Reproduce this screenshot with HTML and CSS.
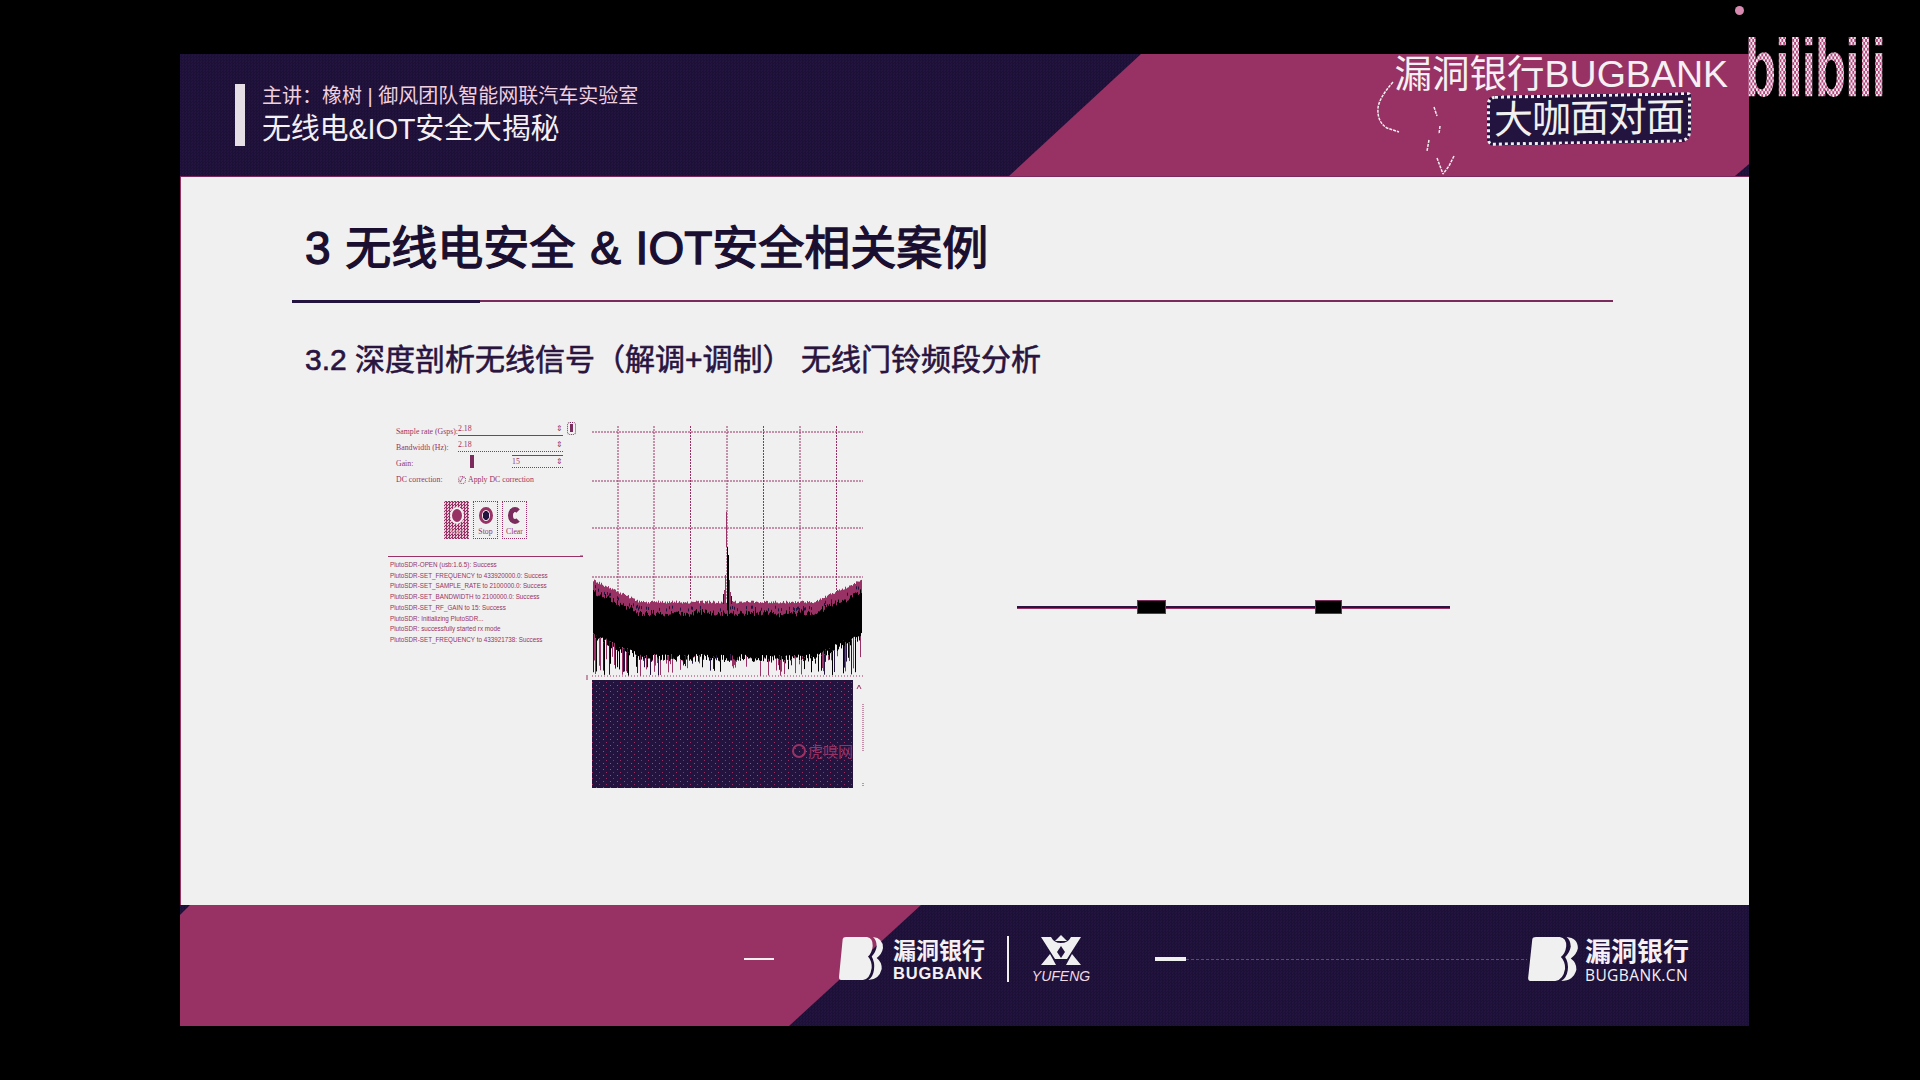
FILE: index.html
```html
<!DOCTYPE html>
<html lang="zh-CN">
<head>
  <meta charset="UTF-8" />
  <title>无线电&amp;IOT安全大揭秘</title>
  <link rel="stylesheet" href="styles.css">
</head>
<body>
  <svg class="defs" width="0" height="0">
    <symbol id="bb-logo" viewBox="0 0 46 46" preserveAspectRatio="none">
      <path fill="#f0f0f0" d="M4.700 3 Q5 1 8 1 L29 1 Q35 2 34.700 10 Q34 17 30 20.500 Q34 25 33.700 32 Q32 43 25 44 L3 44 Q1 44 1 41 Z"/>
      <path fill="#f0f0f0" d="M35 1 Q45 2 45 12 Q44 18 38.700 22 Q44 26 43.700 33 Q41 44 30.300 44 Q35 41 36 33.700 Q37 26 33.700 20.500 Q38 16 38.700 10.300 Q38.500 4 35 1 Z"/>
    </symbol>
  </svg>

  <div class="slide">
    <header class="top-bar">
      <div class="talk">
        <p class="talk-by">主讲&#xFF1A;橡树 | 御风团队智能网联汽车实验室</p>
        <p class="talk-name">无线电&amp;IOT安全大揭秘</p>
      </div>
      <svg class="map-line" viewBox="0 0 90 125" width="90" height="125">
        <path class="map-stroke" d="M20 28 Q6 44 5 54 Q4 68 14 74 L26 78"/>
        <path class="map-stroke" d="M61 53 L64 62 M67 72 L66 80 M56 86 L54 97 M64 104 L70 120 M81 102 L76 112 L70 120"/>
      </svg>
      <div class="brand">
        <div class="brand-name">漏洞银行BUGBANK</div>
        <div class="brand-show"><span>大咖面对面</span></div>
      </div>
    </header>

    <main class="sheet">
      <h1 class="sheet-title">3 无线电安全 &amp; IOT安全相关案例</h1>
      <div class="rule"></div>
      <h2 class="sheet-sub">3.2 深度剖析无线信号&#xFF08;解调+调制&#xFF09; 无线门铃频段分析</h2>

      <div class="demo">
        <div class="gui">
          <div class="gui-row">
            <span>Sample rate (Gsps):</span>
            <span class="field solid">2.18<i>&#8661;</i></span>
            <span class="lock"></span>
          </div>
          <div class="gui-row">
            <span>Bandwidth (Hz):</span>
            <span class="field">2.18<i>&#8661;</i></span>
          </div>
          <div class="gui-row">
            <span>Gain:</span>
            <span class="gain">
              <span class="gain-thumb"></span>
              <span class="field gain-field">15<i>&#8661;</i></span>
            </span>
          </div>
          <div class="gui-row">
            <span>DC correction:</span>
            <span class="check"><b>&#10003;</b>Apply DC correction</span>
          </div>

          <div class="gui-btns">
            <div class="gui-btn active"><span class="ring"></span>Start</div>
            <div class="gui-btn"><span class="ring stop"></span>Stop</div>
            <div class="gui-btn"><span class="ring clear"></span>Clear</div>
          </div>

          <div class="gui-log">
            <div>PlutoSDR-OPEN (usb:1.6.5): Success</div>
            <div>PlutoSDR-SET_FREQUENCY to 433920000.0: Success</div>
            <div>PlutoSDR-SET_SAMPLE_RATE to 2100000.0: Success</div>
            <div>PlutoSDR-SET_BANDWIDTH to 2100000.0: Success</div>
            <div>PlutoSDR-SET_RF_GAIN to 15: Success</div>
            <div>PlutoSDR: Initializing PlutoSDR...</div>
            <div>PlutoSDR: successfully started rx mode</div>
            <div>PlutoSDR-SET_FREQUENCY to 433921738: Success</div>
          </div>
        </div>

        <svg class="spectrum" id="spectrum" viewBox="580 420 290 375" width="290" height="375">
          <defs>
            <pattern id="fall-dots" width="7" height="6" patternUnits="userSpaceOnUse">
              <rect x="1" y="1" width="1" height="1" fill="#b0407a"/>
              <rect x="4" y="4" width="1" height="1" fill="#993264"/>
            </pattern>
          </defs>
          <g class="grid">
            <path d="M592 432H863M592 481H863M592 528H863M592 577H863"/>
            <path d="M618 426V600M654 426V600M690.500 426V600M727 426V600M763.500 426V600M800 426V600M836.500 426V600"/>
          </g>
          <g id="noise"></g>
          <path class="base-line" d="M592 676H863"/>
          <path class="base-mark" d="M587 675V680M580 556H583"/>
          <rect x="592" y="680" width="261" height="108" fill="#23143f"/>
          <rect x="592" y="680" width="261" height="108" fill="url(#fall-dots)"/>
          <svg class="mark" x="790" y="738" width="63" height="28" viewBox="0 0 63 28">
            <circle cx="9" cy="13" r="6" fill="none" stroke="#993264" stroke-width="2"/>
            <text x="18" y="19" font-size="15">虎嗅网</text>
          </svg>
          <path class="scroll" d="M863 704V752M863 783V787"/>
          <path class="scroll-up" d="M857 689L859 685L861 689"/>
        </svg>

        <div class="wire">
          <span class="wire-seg w1"></span>
          <span class="wire-part p1"></span>
          <span class="wire-seg w2"></span>
          <span class="wire-part p2"></span>
          <span class="wire-seg w3"></span>
        </div>
      </div>
    </main>

    <footer class="bottom-bar">
      <span class="dash"></span>
      <svg class="bb" width="46" height="46"><use href="#bb-logo"/></svg>
      <div class="bb-text">
        <div class="bb-cn">漏洞银行</div>
        <div class="bb-en">BUGBANK</div>
      </div>
      <span class="divider"></span>
      <div class="yufeng">
        <svg viewBox="0 0 42 30" width="42" height="30">
          <path fill="#f0f0f0" d="M1 2H11Q14 8 21 8Q28 8 31 2H41L27 24H15Z"/>
          <path fill="#f0f0f0" d="M21 0L27 6H15Z"/>
          <path fill="#23143f" d="M21 11L25 17L21 23L17 17Z"/>
          <path fill="#f0f0f0" d="M1 30L10 19L16 30ZM41 30L32 19L26 30Z"/>
        </svg>
        <div class="yufeng-name">YUFENG</div>
      </div>
      <span class="dash dash-long"></span>
      <span class="trail"></span>
      <svg class="bb bb-right" width="52" height="47"><use href="#bb-logo"/></svg>
      <div class="bb-text right">
        <div class="bb-cn">漏洞银行</div>
        <div class="bb-en">BUGBANK.CN</div>
      </div>
    </footer>
  </div>

  <span class="bili-dot"></span>
  <div class="bili">bilibili</div>

  <script src="spectrum.js"></script>
</body>
</html>
```

FILE: styles.css
```css
* { box-sizing: border-box; }

html, body {
  margin: 0;
  width: 1920px;
  height: 1080px;
  overflow: hidden;
}

body {
  position: relative;
  background: #000;
  font-family: "Liberation Sans", "Noto Sans CJK SC", sans-serif;
}

p, h1, h2 { margin: 0; }

.defs { position: absolute; }

.slide {
  width: 1569px;
  margin: 54px 0 0 180px;
}

/* top strip */
.top-bar {
  position: relative;
  height: 123px;
  display: flex;
  background-color: #23143f;
  background-image: conic-gradient(#1d1036 25%, #23143f 0 50%, #1d1036 0 75%, #23143f 0);
  background-size: 3px 3px;
  border-bottom: 1px solid #7a2a5c;
}

.top-bar::before {
  content: "";
  position: absolute;
  inset: 0;
  background: #993264;
  clip-path: polygon(961px 0, 100% 0, 100% calc(100% - 12px), calc(100% - 14px) 100%, 829px 100%);
}

.talk {
  position: relative;
  margin: 30px 0 0 55px;
  padding-left: 17px;
  height: 62px;
  border-left: 10px solid #e6dfe6;
  color: #f3dbe6;
}

.talk-by {
  font-size: 20px;
  line-height: 24px;
  white-space: nowrap;
  color: #f0cfdf;
}

.talk-name {
  margin-top: 2px;
  font-size: 29px;
  line-height: 38px;
  letter-spacing: -0.200px;
  color: #f4f0f4;
  white-space: nowrap;
}

.map-line {
  position: absolute;
  left: 1193px;
  top: 0;
}

.map-stroke {
  fill: none;
  stroke: #f0f0f0;
  stroke-width: 1.500;
  stroke-dasharray: 3 1;
}

.brand {
  position: relative;
  margin-left: auto;
  width: 360px;
  padding-right: 21px;
  display: flex;
  flex-direction: column;
  align-items: flex-end;
}

.brand-name {
  margin-top: 1px;
  font-size: 37.500px;
  line-height: 39px;
  color: #f4f0f4;
  white-space: nowrap;
}

.brand-show {
  margin: 0 37px 0 0;
  width: 204px;
  height: 50px;
  display: flex;
  align-items: center;
  justify-content: center;
  background: #23143f;
  border: 3px dotted #f0f0f0;
  border-radius: 8px 3px 10px 6px;
  transform: skewY(-1deg);
}

.brand-show span {
  font-size: 39px;
  line-height: 44px;
  color: #f0f0f0;
  white-space: nowrap;
  letter-spacing: -1px;
}

/* white sheet */
.sheet {
  height: 728px;
  background: #f0f0f0;
  border-left: 1px solid #993264;
  overflow: hidden;
}

.sheet-title {
  margin: 41px 0 0 124px;
  font-size: 46px;
  line-height: 60px;
  font-weight: 400;
  -webkit-text-stroke: 1.300px #1a0f30;
  word-spacing: 2px;
  color: #1a0f30;
  white-space: nowrap;
}

.rule {
  margin: 22px 0 0 111px;
  width: 1321px;
  height: 2px;
  background: #7a2a5c;
  position: relative;
}

.rule::before {
  content: "";
  display: block;
  width: 188px;
  height: 3px;
  background: #23143f;
}

.sheet-sub {
  margin: 38px 0 0 124px;
  font-size: 30px;
  line-height: 40px;
  font-weight: 400;
  -webkit-text-stroke: 0.600px #2a1440;
  color: #2a1440;
  white-space: nowrap;
}

.demo {
  display: flex;
  margin: 40px 0 0 199px;
}

/* captured sdr window */
.gui {
  width: 200px;
  padding: 0 0 0 8px;
  font-family: "Liberation Serif", serif;
  font-size: 7.800px;
  color: #993264;
  white-space: nowrap;
}

.gui-row {
  position: relative;
  display: grid;
  grid-template-columns: 62px 105px;
  align-items: end;
  height: 16px;
  padding-left: 8px;
}

.field {
  position: relative;
  display: block;
  height: 13px;
  line-height: 12px;
  border-bottom: 1px dotted #993264;
}

.field.solid { border-bottom-style: solid; }

.field i {
  position: absolute;
  right: 0;
  top: 0;
  font-style: normal;
}

.lock {
  position: absolute;
  left: 179px;
  top: 2px;
  width: 9px;
  height: 13px;
  border: 1px dotted #7a2a5c;
  border-radius: 3px;
}

.lock::after {
  content: "";
  display: block;
  width: 3px;
  height: 8px;
  margin: 1px auto;
  background: #7a2a5c;
}

.gain {
  display: flex;
  align-items: flex-end;
  padding-left: 12px;
}

.gain-thumb {
  width: 4px;
  height: 13px;
  background: #7a2a5c;
}

.gain-field {
  width: 51px;
  margin-left: 38px;
  border-top: 1px solid #993264;
}

.check b {
  display: inline-block;
  width: 8px;
  height: 8px;
  margin-right: 2px;
  border: 1px dotted #993264;
  border-radius: 50%;
  font-size: 7px;
  line-height: 7px;
  font-weight: 400;
}

.gui-btns {
  display: flex;
  gap: 4px;
  margin: 17px 0 0 56px;
}

.gui-btn {
  width: 25px;
  height: 38px;
  display: flex;
  flex-direction: column;
  align-items: center;
  justify-content: space-between;
  padding: 5px 0 2px;
  border: 1px dotted #993264;
}

.gui-btn.active {
  color: #d8a8c0;
  background: repeating-conic-gradient(#993264 0 25%, #e8c8d8 0 50%) 0 0 / 3px 3px;
  border-color: transparent;
}

.ring {
  width: 14px;
  height: 17px;
  border: 3px solid #993264;
  border-radius: 50%;
}

.ring.stop {
  background: radial-gradient(#23143f 0 3px, transparent 3.500px);
}

.ring.clear {
  border-color: #7a2a5c;
  border-width: 5px;
  border-right-color: transparent;
}

.active .ring {
  border-color: #f0f0f0;
  border-width: 2px;
  background: #993264;
}

.gui-log {
  margin-top: 17px;
  width: 195px;
  padding: 3px 0 0 2px;
  border-top: 1px solid #993264;
  font-family: "Liberation Sans", sans-serif;
  font-size: 6.300px;
  line-height: 10.700px;
}

.spectrum { flex: none; }

.grid path {
  fill: none;
  stroke: #993264;
  stroke-width: 1;
  stroke-dasharray: 2 1;
}

.base-line {
  stroke: #993264;
  stroke-dasharray: 1 2;
}

.base-mark { stroke: #993264; }

.mark text {
  font-family: "Noto Sans CJK SC", sans-serif;
  fill: #993264;
}

.scroll {
  stroke: #993264;
  stroke-dasharray: 1 1;
}

.scroll-up {
  fill: none;
  stroke: #993264;
}

/* doorbell signal line */
.wire {
  display: flex;
  align-items: center;
  height: 14px;
  margin: 180px 0 0 147px;
}

.wire-seg {
  height: 3px;
  background: #2a1440;
  border-bottom: 1px solid #993264;
}

.w1 { width: 120px; }
.w2 { width: 149px; }
.w3 { width: 108px; }

.wire-part {
  height: 14px;
  background: #000;
  border: 1px solid #7a2a5c;
}

.p1 { width: 29px; }
.p2 { width: 27px; }

/* bottom strip */
.bottom-bar {
  position: relative;
  height: 121px;
  display: flex;
  align-items: center;
  padding-bottom: 13px;
  background-color: #23143f;
  background-image: conic-gradient(#1d1036 25%, #23143f 0 50%, #1d1036 0 75%, #23143f 0);
  background-size: 3px 3px;
}

.bottom-bar::before {
  content: "";
  position: absolute;
  inset: 0;
  background: #993264;
  clip-path: polygon(10px 0, 741px 0, 609px 100%, 0 100%, 0 10px);
}

.bottom-bar > * { position: relative; }

.dash {
  width: 30px;
  height: 2px;
  margin: 0 0 0 564px;
  background: #f0f0f0;
}

.bb { margin-left: 64px; flex: none; }

.bb-text {
  margin: 3px 0 0 9px;
  width: 92px;
  color: #f4f0f4;
  white-space: nowrap;
}

.bb-cn {
  font-size: 23px;
  line-height: 26px;
  font-weight: 700;
}

.bb-en {
  font-size: 16.500px;
  line-height: 19px;
  letter-spacing: 0.800px;
  font-weight: 700;
}

.divider {
  width: 2px;
  height: 46px;
  margin-left: 22px;
  background: #f0f0f0;
}

.yufeng {
  width: 58px;
  margin-left: 23px;
  display: flex;
  flex-direction: column;
  align-items: center;
}

.yufeng svg { display: block; }

.yufeng-name {
  margin-top: 3px;
  font-size: 14px;
  line-height: 16px;
  font-style: italic;
  color: #f0d8e4;
}

.dash-long {
  height: 4px;
  width: 31px;
  margin-left: 65px;
}

.trail {
  width: 341px;
  height: 1px;
  background: repeating-linear-gradient(90deg, #993264 0 3px, transparent 3px 5px);
}

.bb-right { margin-left: 0; }

.bb-text.right { margin: 3px 0 0 6px; width: 103px; }

.right .bb-cn {
  font-size: 26px;
  line-height: 30px;
}

.right .bb-en {
  font-size: 15.500px;
  line-height: 17px;
  letter-spacing: 0.400px;
  font-weight: 400;
  font-family: "Open Sans", sans-serif;
}

/* player watermark */
.bili-dot {
  position: absolute;
  left: 1735px;
  top: 6px;
  width: 9px;
  height: 9px;
  border-radius: 50%;
  background: #d88ab0;
}

.bili {
  position: absolute;
  left: 1745px;
  top: 28px;
  width: 165px;
  height: 80px;
  font-family: "Liberation Sans", sans-serif;
  font-size: 56px;
  line-height: 80px;
  font-weight: 700;
  letter-spacing: -1px;
  white-space: nowrap;
  color: transparent;
  background: repeating-conic-gradient(#f0f0f0 0 25%, #b8447e 0 50%) 0 0 / 4px 4px;
  -webkit-background-clip: text;
  background-clip: text;
  transform: scaleX(0.91) scaleY(1.45);
  transform-origin: 0 50%;
}
```

FILE: spectrum.js
```js
// draws the noisy trace of the captured spectrum, seeded so it stays the same
(function () {
  const ns = "http://www.w3.org/2000/svg";
  const group = document.getElementById("noise");
  let seed = 4711;

  function rnd() {
    seed = (seed * 1103515245 + 12345) % 2147483648;
    return seed / 2147483648;
  }

  function bar(x, y1, y2, color) {
    const r = document.createElementNS(ns, "rect");
    r.setAttribute("x", x);
    r.setAttribute("y", y1);
    r.setAttribute("width", 1);
    r.setAttribute("height", Math.max(y2 - y1, 0));
    r.setAttribute("fill", color);
    group.appendChild(r);
  }

  function topOf(x) {
    const edge = Math.min(x - 592, 862 - x);
    if (edge < 48) return 602 - (48 - edge) * 0.46;
    return 602;
  }

  for (let x = 593; x < 862; x++) {
    const top = topOf(x) + rnd() * 3 - 1.5;
    const edge = Math.min(x - 592, 862 - x);
    const low = (edge < 48 ? 632 + edge * 0.45 : 654) + rnd() * 8;
    const depth = 656 + rnd() * 20;
    const tone = rnd();
    const under = tone < 0.45 ? "#993264" : tone < 0.7 ? "#23143f" : "#000";
    const band = 9 + rnd() * 6;

    bar(x, top, top + band, "#993264");
    bar(x, top + band - 1, low, "#000");
    if (rnd() < 0.5) bar(x, low, depth, under);
    if (rnd() < 0.22) bar(x, top + 5, top + 8, "#23143f");
  }

  // carrier spike in the middle
  bar(726, 512, 547, "#993264");
  bar(727, 547, 610, "#000");
  bar(728, 555, 610, "#000");
  bar(725, 575, 605, "#993264");
  bar(729, 580, 605, "#993264");
  bar(724, 590, 604, "#993264");
  bar(730, 592, 604, "#993264");
  bar(723, 594, 604, "#23143f");
  bar(731, 596, 604, "#23143f");
})();
```
